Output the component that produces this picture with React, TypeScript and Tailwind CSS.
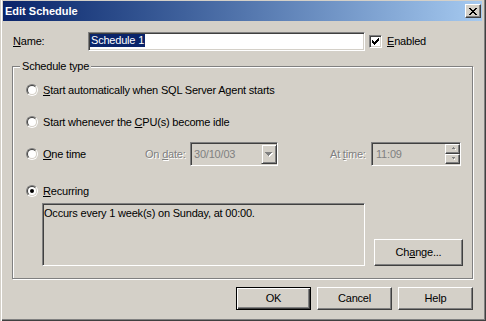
import React from "react";

const sunken =
  "border border-t-[#808080] border-l-[#808080] border-r-white border-b-white shadow-[inset_1px_1px_0_#404040,inset_-1px_-1px_0_#d4d0c8]";
const raised =
  "border border-t-white border-l-white border-r-[#404040] border-b-[#404040] shadow-[inset_-1px_-1px_0_#808080]";
const disabledText = "text-[#808080] [text-shadow:1px_1px_0_#fff]";

function Radio({ checked }: { checked?: boolean }) {
  return (
    <div className="w-[12px] h-[12px] shrink-0 rounded-full border border-t-[#808080] border-l-[#808080] border-r-white border-b-white">
      <div className="w-full h-full rounded-full border border-t-[#404040] border-l-[#404040] border-r-[#d4d0c8] border-b-[#d4d0c8] bg-white flex items-center justify-center">
        {checked && <div className="w-[4px] h-[4px] rounded-full bg-black" />}
      </div>
    </div>
  );
}

function RadioRow({ checked, children }: { checked?: boolean; children: React.ReactNode }) {
  return (
    <div className="flex items-center h-[14px] pl-[13px]">
      <Radio checked={checked} />
      <span className="ml-[5px] whitespace-nowrap">{children}</span>
    </div>
  );
}

function Button({ children, primary, className = "" }: { children: React.ReactNode; primary?: boolean; className?: string }) {
  return (
    <div
      className={
        "flex items-center justify-center " +
        (primary
          ? "border border-black shadow-[inset_1px_1px_0_#fff,inset_-1px_-1px_0_#404040,inset_-2px_-2px_0_#808080] "
          : raised + " ") +
        className
      }
    >
      {children}
    </div>
  );
}

export default function App() {
  return (
    <div className="w-[486px] h-[321px] bg-[#d4d0c8] pt-[1px] pl-[3px] text-[11px] leading-[13px] tracking-[-0.2px] text-black font-['Liberation_Sans',Arial,sans-serif] shadow-[inset_1px_0_0_#d4d0c8,inset_2px_0_0_#fff,inset_-1px_-1px_0_#404040,inset_-2px_-2px_0_#808080] overflow-hidden select-none">
      {/* Title bar */}
      <div className="w-[479px] h-[20px] flex items-center justify-between pl-[2px] pr-[1px] bg-linear-to-r from-[#0a246a] to-[#a6caf0]">
        <span className="text-white font-bold text-[11px] tracking-normal">Edit Schedule</span>
        <div className={"w-[16px] h-[14px] bg-[#d4d0c8] flex items-center justify-center " + raised}>
          <svg width="8" height="7" viewBox="0 0 8 7" shapeRendering="crispEdges">
            <path d="M0 0h2v1h-2zM6 0h2v1h-2zM1 1h2v1h-2zM5 1h2v1h-2zM2 2h4v1h-4zM3 3h2v1h-2zM2 4h4v1h-4zM1 5h2v1h-2zM5 5h2v1h-2zM0 6h2v1h-2zM6 6h2v1h-2z" fill="#000" />
          </svg>
        </div>
      </div>

      {/* Name row */}
      <div className="mt-[11px] h-[19px] flex items-center pl-[10px]">
        <span className="w-[75px]">
          <u>N</u>ame:
        </span>
        <div className={"w-[277px] h-[19px] bg-white pl-[1px] pt-[1px] " + sunken}>
          <span className="inline-block bg-[#0a246a] text-white h-[13px] px-[1px] leading-[13px]">Schedule 1</span>
        </div>
        <div className={"ml-[4px] w-[13px] h-[13px] bg-white flex items-center justify-center " + sunken}>
          <svg width="7" height="7" viewBox="0 0 7 7" shapeRendering="crispEdges">
            <path d="M6 0h1v3h-1zM5 1h1v3h-1zM4 2h1v3h-1zM3 3h1v3h-1zM2 4h1v3h-1zM1 3h1v3h-1zM0 2h1v3h-1z" fill="#000" />
          </svg>
        </div>
        <span className="ml-[5px]">
          <u>E</u>nabled
        </span>
      </div>

      {/* Schedule type group */}
      <div className="relative mt-[15px] ml-[9px] w-[461px] h-[213px] border border-[#808080] shadow-[1px_1px_0_#fff,inset_1px_1px_0_#fff]">
        <span className="absolute left-[7px] top-[-7px] bg-[#d4d0c8] px-[2px]">Schedule type</span>

        <div className="mt-[16px]">
          <RadioRow>
            <u>S</u>tart automatically when SQL Server Agent starts
          </RadioRow>
        </div>
        <div className="mt-[18px]">
          <RadioRow>
            Start whenever the <u>C</u>PU(s) become idle
          </RadioRow>
        </div>

        <div className="mt-[13px] h-[24px] flex items-center">
          <div className="w-[132px] flex items-center pl-[13px]">
            <Radio />
            <span className="ml-[5px]">
              <u>O</u>ne time
            </span>
          </div>
          <span className={"w-[45px] " + disabledText}>
            On <u>d</u>ate:
          </span>
          <div className={"w-[88px] h-[24px] flex items-center justify-between bg-[#d4d0c8] pl-[3px] " + sunken}>
            <span className="text-[#808080]">30/10/03</span>
            <div className="w-[16px] h-[20px] flex items-center justify-center border border-t-[#d4d0c8] border-l-[#d4d0c8] border-r-[#404040] border-b-[#404040] shadow-[inset_1px_1px_0_#fff,inset_-1px_-1px_0_#808080]">
              <svg width="8" height="5" viewBox="0 0 8 5" shapeRendering="crispEdges">
                <path d="M1 1h7l-3.5 4z" fill="#fff" />
                <path d="M0 0h7l-3.5 4z" fill="#808080" />
              </svg>
            </div>
          </div>
          <span className={"ml-[52px] w-[41px] " + disabledText}>
            At <u>t</u>ime:
          </span>
          <div className={"w-[90px] h-[24px] flex items-center justify-between bg-[#d4d0c8] pl-[4px] " + sunken}>
            <span className="text-[#808080]">11:09</span>
            <div className="w-[15px] h-[20px] flex flex-col">
              <div className={"flex-1 flex items-center justify-center " + raised}>
                <svg width="6" height="4" viewBox="0 0 6 4" shapeRendering="crispEdges">
                  <path d="M3 0h1v1h-1zM2 1h3v1h-3z" fill="#808080" />
                  <path d="M5 2h1v1h-1z" fill="#fff" />
                </svg>
              </div>
              <div className={"flex-1 flex items-center justify-center " + raised}>
                <svg width="6" height="4" viewBox="0 0 6 4" shapeRendering="crispEdges">
                  <path d="M2 0h3v1h-3zM3 1h1v1h-1z" fill="#808080" />
                  <path d="M4 2h1v1h-1z" fill="#fff" />
                </svg>
              </div>
            </div>
          </div>
        </div>

        <div className="mt-[18px]">
          <RadioRow checked>
            <u>R</u>ecurring
          </RadioRow>
        </div>

        <div className="mt-[5px] flex items-start pl-[29px]">
          <div className={"w-[323px] h-[63px] bg-[#d4d0c8] pl-[1px] pt-[3px] " + sunken}>
            Occurs every 1 week(s) on Sunday, at 00:00.
          </div>
          <Button className="ml-[9px] mt-[36px] w-[89px] h-[27px]">
            Ch<u>a</u>nge...
          </Button>
        </div>
      </div>

      {/* Bottom buttons */}
      <div className="mt-[8px] ml-[233px] flex gap-[6px]">
        <Button primary className="w-[75px] h-[23px]">
          OK
        </Button>
        <Button className="w-[75px] h-[23px]">Cancel</Button>
        <Button className="w-[75px] h-[23px]">Help</Button>
      </div>
    </div>
  );
}
